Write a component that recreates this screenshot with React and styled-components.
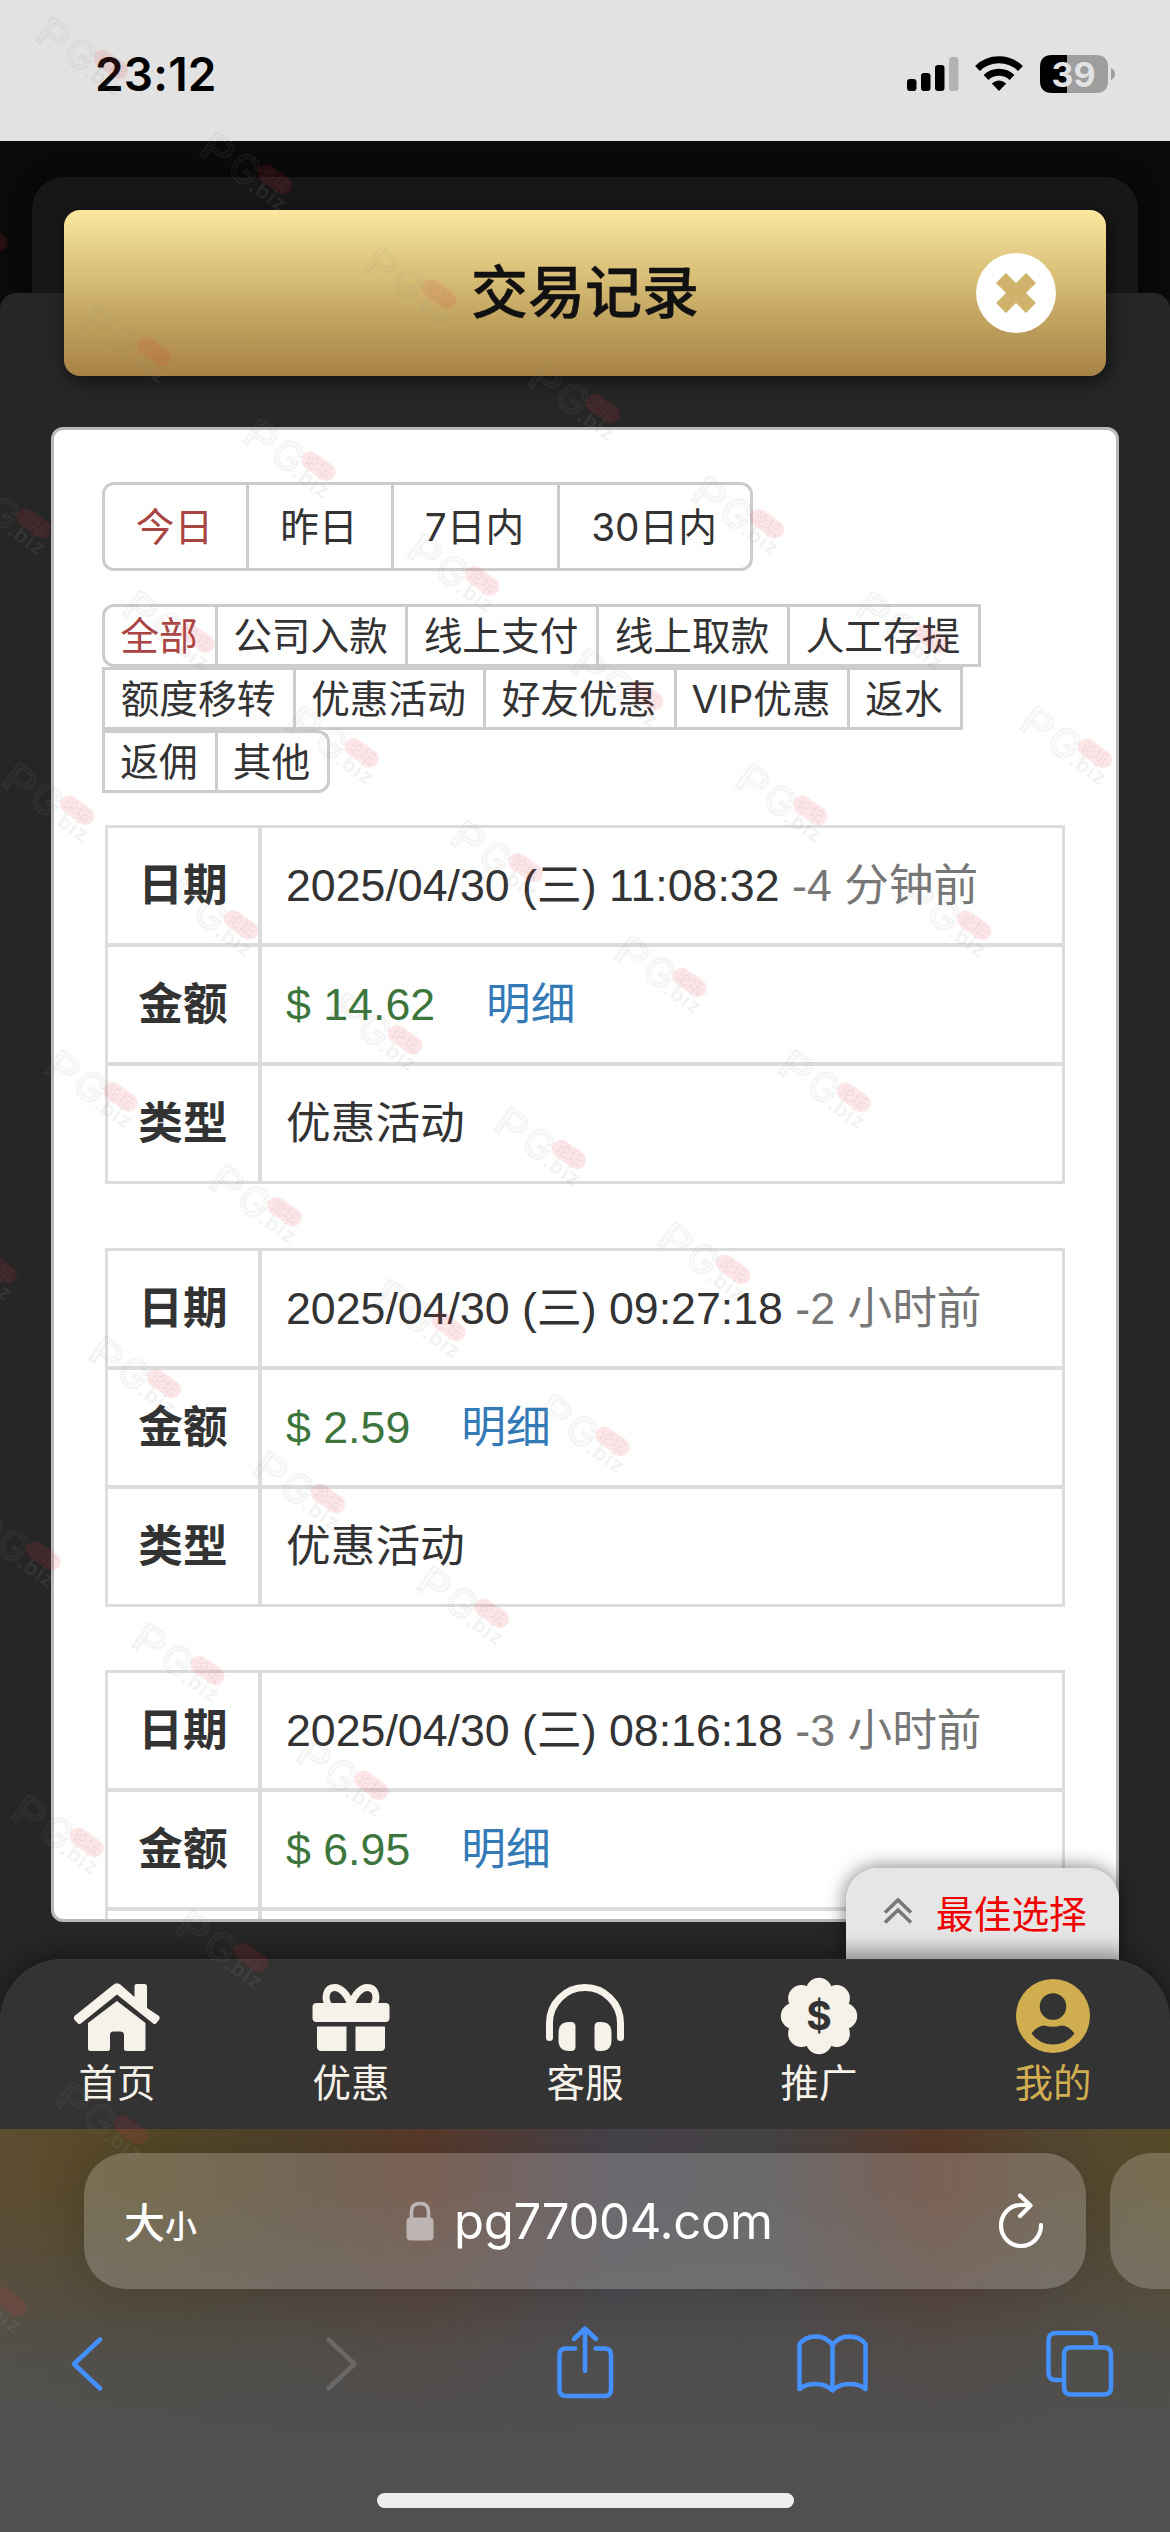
import styled, { createGlobalStyle, css } from "styled-components";

const GlobalStyle = createGlobalStyle`
  * {
    box-sizing: border-box;
  }
  body {
    margin: 0;
    background: #505050;
  }
  button {
    font: inherit;
    color: inherit;
    border: 0;
    padding: 0;
    background: none;
  }
`;

const Screen = styled.div`
  position: relative;
  width: 1170px;
  height: 2532px;
  display: flex;
  flex-direction: column;
  overflow: hidden;
  font-family: "Inter", "Noto Sans CJK SC", sans-serif;
  color: #333;
`;

/* ---------- status bar ---------- */

const StatusBar = styled.div`
  height: 141px;
  flex: none;
  display: flex;
  justify-content: space-between;
  padding: 45px 55px 0 95px;
  background: #e2e2e2;
  color: #000;
`;
const Clock = styled.div`
  height: 60px;
  line-height: 59px;
  font-size: 46px;
  font-weight: 600;
  letter-spacing: 0.2px;
`;
const StatusIcons = styled.svg`
  width: 210px;
  height: 60px;
`;

/* ---------- site ---------- */

const Site = styled.div`
  position: relative;
  height: 1988px;
  flex: none;
  display: flex;
  flex-direction: column;
  overflow: hidden;
  background: #0a0a0a;
`;
const BackSheet = styled.div`
  position: absolute;
  top: 36px;
  left: 32px;
  right: 32px;
  height: 300px;
  border-radius: 32px 32px 0 0;
  background: #171717;
  box-shadow: 0 0 20px rgba(0, 0, 0, 0.6);
`;
const FrontSheet = styled.div`
  position: absolute;
  top: 152px;
  left: 0;
  right: 0;
  bottom: 0;
  border-radius: 16px 16px 0 0;
  background: #262626;
`;
const TitleBar = styled.div`
  position: relative;
  height: 166px;
  flex: none;
  margin: 69px 64px 0;
  display: flex;
  align-items: center;
  justify-content: center;
  border-radius: 16px;
  background: linear-gradient(#fbe79d 0%, #c6a964 60%, #b39150 85%, #a78145 100%);
  box-shadow: 3px 5px 16px rgba(0, 0, 0, 0.55);
`;
const Title = styled.h1`
  margin: 0;
  line-height: 80px;
  font-size: 57px;
  font-weight: 500;
  -webkit-text-stroke: 0.5px #111;
  color: #111;
`;
const CloseButton = styled.button`
  position: absolute;
  right: 50px;
  top: 43px;
  width: 80px;
  height: 80px;
  svg {
    display: block;
  }
`;
const Panel = styled.div`
  position: relative;
  height: 1495px;
  flex: none;
  margin: 51px 51px 0;
  padding: 52px 48px 0;
  overflow: hidden;
  border: 3px solid #b9b9b9;
  border-radius: 12px;
  background: #fff;
`;

/* ---------- filters ---------- */

const ButtonRow = styled.div`
  display: flex;
`;
const DateTabs = styled(ButtonRow)`
  margin-bottom: 33px;
`;
const FilterButton = styled.button`
  height: ${({ $tall }) => ($tall ? "89px" : "63px")};
  padding: ${({ $tall }) => ($tall ? "0 31px 0 29px" : "0 16px 0 14px")};
  line-height: ${({ $tall }) => ($tall ? "82px" : "56px")};
  width: ${({ $width }) => $width}px;
  border: 3px solid #ccc;
  background: #fff;
  font-size: 38.7px;
  white-space: nowrap;
  color: ${({ $active }) => ($active ? "#a94442" : "#333")};
  & + & {
    margin-left: -3px;
  }
  ${({ $first }) =>
    $first &&
    css`
      border-top-left-radius: 12px;
      border-bottom-left-radius: 12px;
    `}
  ${({ $last }) =>
    $last &&
    css`
      border-top-right-radius: 12px;
      border-bottom-right-radius: 12px;
    `}
`;

/* ---------- records ---------- */

const Records = styled.div`
  padding: 32px 3px 0;
`;
const RecordCard = styled.dl`
  margin: 0 0 63.5px;
  padding: 3px;
  display: grid;
  grid-template-columns: 150px 1fr;
  grid-auto-rows: 115px;
  gap: 4px;
  background: #dcdcdc;
  font-family: "Liberation Sans", "Noto Sans CJK SC", sans-serif;
  font-size: 44.7px;
  line-height: 115px;
  white-space: pre;
`;
const Label = styled.dt`
  background: #fff;
  text-align: center;
  font-weight: 700;
`;
const Value = styled.dd`
  margin: 0;
  padding-left: 24px;
  background: #fff;
`;
const Ago = styled.span`
  color: #777;
`;
const Amount = styled.span`
  color: #3c763d;
`;
const DetailLink = styled.a`
  margin-left: 51px;
  color: #337ab7;
`;

/* ---------- bottom navigation ---------- */

const BestPick = styled.div`
  position: absolute;
  right: 51px;
  bottom: 169px;
  width: 273px;
  height: 92px;
  display: flex;
  padding: 0 0 0 34px;
  border-radius: 32px 32px 0 0;
  background: linear-gradient(#e6e6e6 75%, #d2d2d2);
  box-shadow: 0 0 20px rgba(0, 0, 0, 0.55);
  font-size: 37.7px;
  line-height: 93px;
  color: #f00000;
  svg {
    margin: 26px 20px 0 0;
  }
`;
const TabBar = styled.nav`
  position: relative;
  height: 170px;
  flex: none;
  margin-top: 37px;
  display: flex;
  border-radius: 62px 62px 0 0;
  border-top: 1px solid #3c3c3c;
  background: #333;
  box-shadow: 0 -4px 24px rgba(0, 0, 0, 0.4);
`;
const Tab = styled.a`
  flex: 1;
  display: flex;
  flex-direction: column;
  align-items: center;
  padding-top: 17px;
  font-size: 38.5px;
  line-height: 56px;
  color: ${({ $active }) => ($active ? "#d0ae50" : "#f6f2ea")};
  svg {
    display: block;
  }
`;

/* ---------- browser chrome ---------- */

const Browser = styled.div`
  position: relative;
  flex: 1;
  background:
    linear-gradient(rgba(80, 80, 80, 0) 15%, rgba(80, 80, 80, 0.85) 58%, #505050 80%),
    linear-gradient(90deg, #5d4d31 0%, #554826 13%, #50402c 26%, #5a3a2b 36%, #47434b 52%, #474446 66%, #5a3a2a 80%, #554833 90%, #554926 100%);
`;
const AddressRow = styled.div`
  display: flex;
  gap: 24px;
  padding: 24px 0 0 84px;
`;
const AddressBar = styled.div`
  width: 1002px;
  height: 136px;
  flex: none;
  display: flex;
  align-items: center;
  padding: 0 40px;
  border-radius: 42px;
  background: rgba(255, 255, 255, 0.2);
  box-shadow: 0 0 50px rgba(0, 0, 0, 0.15);
  color: #fff;
`;
const NextTab = styled.div`
  width: 200px;
  height: 136px;
  flex: none;
  border-radius: 42px;
  background: rgba(255, 255, 255, 0.2);
`;
const TextSize = styled.span`
  width: 282px;
  padding-top: 1px;
  font-family: "Noto Sans CJK SC", sans-serif;
  font-size: 41px;
  font-weight: 500;
  line-height: 60px;
  small {
    font-size: 32px;
  }
`;
const Address = styled.span`
  flex: 1;
  padding: 2px 0 0 20px;
  font-size: 49px;
  line-height: 60px;
  letter-spacing: -0.3px;
`;
const Toolbar = styled.div`
  display: flex;
  align-items: center;
  justify-content: space-between;
  height: 76px;
  margin-top: 37px;
  padding: 0 54px 0 52px;
`;
const HomeIndicator = styled.div`
  width: 417px;
  height: 15px;
  margin: 91px auto 0;
  border-radius: 8px;
  background: #eee;
`;

const Watermarks = styled.svg`
  position: absolute;
  inset: 0;
  width: 1170px;
  height: 2532px;
  pointer-events: none;
`;

/* ---------- data ---------- */

const dateTabs = [
  { text: "今日", width: 147 },
  { text: "昨日", width: 148 },
  { text: "7日内", width: 169 },
  { text: "30日内", width: 196 },
];

const filterRows = [
  [
    { text: "全部", width: 116 },
    { text: "公司入款", width: 193 },
    { text: "线上支付", width: 194 },
    { text: "线上取款", width: 194 },
    { text: "人工存提", width: 194 },
  ],
  [
    { text: "额度移转", width: 194 },
    { text: "优惠活动", width: 193 },
    { text: "好友优惠", width: 194 },
    { text: "VIP优惠", width: 176 },
    { text: "返水", width: 116 },
  ],
  [
    { text: "返佣", width: 116 },
    { text: "其他", width: 115 },
  ],
];

const records = [
  { date: "2025/04/30 (三) 11:08:32", ago: "-4 分钟前", amount: "$ 14.62", type: "优惠活动" },
  { date: "2025/04/30 (三) 09:27:18", ago: "-2 小时前", amount: "$ 2.59", type: "优惠活动" },
  { date: "2025/04/30 (三) 08:16:18", ago: "-3 小时前", amount: "$ 6.95", type: "优惠活动" },
];

// diagonal grid, every line is one mark shorter than the line above
const marks = [];
for (let row = 0; row <= 9; row += 1) {
  for (let col = -3; col + row <= 6; col += 1) {
    const x = 33 + col * 164 + row * 43.4;
    const y = 38 + col * 114.8 + row * 286.8;
    if (x > -100 && y > 0) marks.push({ x, y });
  }
}

/* ---------- icons ---------- */

const SystemStatus = () => (
  <StatusIcons viewBox="905 45 210 60">
    <rect x="907" y="79" width="9.5" height="12" rx="3" />
    <rect x="921" y="73" width="9.5" height="18" rx="3" />
    <rect x="935" y="65" width="9.5" height="26" rx="3" />
    <rect x="949" y="57" width="9.5" height="34" rx="3" fill="#b3b3b3" />
    <path d="M977.5 68.5 A31 31 0 0 1 1020.5 68.5" fill="none" stroke="#000" strokeWidth="7" />
    <path d="M986 77.5 A19 19 0 0 1 1012 77.5" fill="none" stroke="#000" strokeWidth="7" />
    <path d="M999 91 L991.8 83.6 Q999 77.5 1006.2 83.6 Z" />
    <path d="M1052 55 H1067 V93 H1052 Q1040 93 1040 81 V67 Q1040 55 1052 55 Z" />
    <path d="M1067 55 H1096 Q1108 55 1108 67 V81 Q1108 93 1096 93 H1067 Z" fill="#9e9e9e" />
    <path d="M1111 68 Q1115 70 1115 74 Q1115 78 1111 80 Z" fill="#9e9e9e" />
    <text x="1073.5" y="86.5" textAnchor="middle" fontSize="34" fontWeight="700" fill="#e2e2e2">
      39
    </text>
  </StatusIcons>
);

const CloseIcon = () => (
  <svg width="80" height="80" viewBox="0 0 80 80">
    <circle cx="40" cy="40" r="40" fill="#fff" />
    <path d="M25 25 L55 55 M55 25 L25 55" stroke="#d0b26b" strokeWidth="14" />
  </svg>
);

const ChevronsUp = () => (
  <svg width="36" height="40" viewBox="880 1894 36 40" fill="none" stroke="#777" strokeWidth="3.6">
    <path d="M885 1912.5 L898 1900 L911 1912.5 M885 1922.5 L898 1910 L911 1922.5" />
  </svg>
);

const HomeIcon = () => (
  <svg width="90" height="78" viewBox="71.5 1977 90 78" fill="currentColor">
    <path d="M112.5 1985 Q116.5 1981.5 120.5 1985 L134 1997 V1986 Q134 1984 136 1984 H144 Q146.5 1984 146.5 1986.5 V2008 L158.5 2016 Q160 2018 158.5 2020 L155.5 2023.5 Q154 2025 152 2023 L116.5 1994.5 L81 2023 Q79 2025 77.5 2023.5 L74 2020 Q72.5 2018 74 2016 Z" />
    <path d="M116.5 2001 L145 2023 V2048.5 Q145 2051 142.5 2051 H126 Q123.5 2051 123.5 2048.5 V2035 Q123.5 2031.5 120 2031.5 H112.5 Q109.5 2031.5 109.5 2035 V2048.5 Q109.5 2051 107 2051 H90 Q87.5 2051 87.5 2048.5 V2023 Z" />
  </svg>
);

const GiftIcon = () => (
  <svg width="90" height="78" viewBox="305.5 1977 90 78" fill="currentColor">
    <path
      d="M350.5 2005 C346 1992 339 1987.5 334.5 1987.5 C324.5 1987.5 324 1999 328 2005 M350.5 2005 C355 1992 362 1987.5 366.5 1987.5 C376.5 1987.5 377 1999 373 2005"
      fill="none"
      stroke="currentColor"
      strokeWidth="7"
    />
    <rect x="312" y="2003" width="77" height="19" rx="4" />
    <path d="M316.5 2026.5 H346 V2051 H321 Q316.5 2051 316.5 2046.5 Z" />
    <path d="M355 2026.5 H384.5 V2046.5 Q384.5 2051 380 2051 H355 Z" />
  </svg>
);

const HeadsetIcon = () => (
  <svg width="90" height="78" viewBox="540 1977 90 78" fill="currentColor">
    <path
      d="M549.5 2037.5 V2023 A35.5 35.5 0 0 1 620.5 2023 V2037.5"
      fill="none"
      stroke="currentColor"
      strokeWidth="7"
      strokeLinecap="round"
    />
    <path d="M569 2022 H571 Q575.5 2022 575.5 2026.5 V2046.5 Q575.5 2051 571 2051 H569 Q558.5 2051 558.5 2040 V2033 Q558.5 2022 569 2022 Z" />
    <path d="M601 2022 H599 Q594.5 2022 594.5 2026.5 V2046.5 Q594.5 2051 599 2051 H601 Q611.5 2051 611.5 2040 V2033 Q611.5 2022 601 2022 Z" />
  </svg>
);

const PromoIcon = () => (
  <svg width="90" height="78" viewBox="773.5 1978.5 90 78" fill="currentColor">
    <circle cx="818.5" cy="2017.5" r="27" />
    {[0, 45, 90, 135, 180, 225, 270, 315].map((deg) => (
      <circle key={deg} cx="818.5" cy="1992.5" r="13.2" transform={`rotate(${deg} 818.5 2017.5)`} />
    ))}
    <text x="818.5" y="2031.5" textAnchor="middle" fontSize="39" fontWeight="700" fill="#333">
      $
    </text>
  </svg>
);

const ProfileIcon = () => (
  <svg width="90" height="78" viewBox="1007.5 1978 90 78">
    <circle cx="1052.5" cy="2017" r="37" fill="currentColor" />
    <circle cx="1052.5" cy="2007.5" r="13.3" fill="#333" />
    <path
      d="M1031 2034.5 Q1037 2026.5 1044 2026.5 Q1052.5 2029 1061 2026.5 Q1068 2026.5 1074 2034.5 Q1066 2045.5 1052.5 2045.5 Q1039 2045.5 1031 2034.5 Z"
      fill="#333"
    />
  </svg>
);

const LockIcon = () => (
  <svg width="28" height="42" viewBox="405.5 2199.5 28 42">
    <path d="M411 2219 V2211 Q411 2203 419.5 2203 Q428 2203 428 2211 V2219" fill="none" stroke="#bdb5b3" strokeWidth="3.6" />
    <rect x="406" y="2217" width="27" height="23" rx="4" fill="#bdb5b3" />
  </svg>
);

const ReloadIcon = () => (
  <svg
    width="50"
    height="60"
    viewBox="995 2190 50 60"
    fill="none"
    stroke="#fff"
    strokeWidth="4.2"
    strokeLinecap="round"
    strokeLinejoin="round"
  >
    <path d="M1040 2224 A20 20.5 0 1 1 1020 2204 H1029 M1019 2194.5 L1029.5 2204.5 L1019 2215" />
  </svg>
);

const ToolIcon = ({ left, d, color = "#4590ff" }) => (
  <svg
    width="72"
    height="76"
    viewBox={`${left} 2326 72 76`}
    fill="none"
    stroke={color}
    strokeWidth="4.5"
    strokeLinecap="round"
    strokeLinejoin="round"
    overflow="visible"
  >
    <path d={d} />
  </svg>
);

const tools = [
  { left: 52, d: "M100 2339.5 L74 2364 L100 2388.5" },
  { left: 300, d: "M328.5 2339.5 L354.5 2364 L328.5 2388.5", color: "#6a6967" },
  {
    left: 548,
    d: "M575 2348.5 H566 Q559.5 2348.5 559.5 2355 V2389.5 Q559.5 2396 566 2396 H604.5 Q611 2396 611 2389.5 V2355 Q611 2348.5 604.5 2348.5 H595.5 M585 2371 V2329 M574 2339 L585 2328.5 L596 2339",
  },
  {
    left: 796,
    d: "M832.5 2390.5 V2345 Q826 2336.5 816 2336.5 Q805 2336.5 799.5 2344 V2389 Q805 2384 816 2384 Q826 2384 832.5 2390.5 Q839 2384 849 2384 Q860 2384 865.5 2389 V2344 Q860 2336.5 849 2336.5 Q839 2336.5 832.5 2345",
  },
  {
    left: 1044,
    d: "M1060 2380 H1056 Q1048.5 2380 1048.5 2372.5 V2340.5 Q1048.5 2333 1056 2333 H1088.5 Q1096 2333 1096 2340.5 V2345 M1071 2347.5 H1104 Q1111 2347.5 1111 2354.5 V2387.5 Q1111 2394.5 1104 2394.5 H1071 Q1064 2394.5 1064 2387.5 V2354.5 Q1064 2347.5 1071 2347.5 Z",
  },
];

const tabs = [
  { text: "首页", Icon: HomeIcon },
  { text: "优惠", Icon: GiftIcon },
  { text: "客服", Icon: HeadsetIcon },
  { text: "推广", Icon: PromoIcon },
  { text: "我的", Icon: ProfileIcon, active: true },
];

function Record({ record }) {
  return (
    <RecordCard>
      <Label>日期</Label>
      <Value>
        {record.date} <Ago>{record.ago}</Ago>
      </Value>
      <Label>金额</Label>
      <Value>
        <Amount>{record.amount}</Amount>
        <DetailLink>明细</DetailLink>
      </Value>
      <Label>类型</Label>
      <Value>{record.type}</Value>
    </RecordCard>
  );
}

function Watermark({ x, y }) {
  return (
    <g transform={`translate(${x} ${y}) rotate(35)`}>
      <g fill="none" stroke="#8a8a8a" strokeWidth="2.6" strokeDasharray="1.5 1" strokeOpacity="0.15" fontSize="39">
        <text x="0" y="0" textLength="31" lengthAdjust="spacingAndGlyphs">
          P
        </text>
        <text x="34" y="0">
          G
        </text>
      </g>
      <text x="62" y="1" fontSize="21" fontWeight="600" letterSpacing="1" fill="#999" fillOpacity="0.15">
        .biz
      </text>
      <rect x="60" y="-32" width="38" height="18" rx="9" fill="#f0323c" fillOpacity="0.12" />
      <text x="79" y="-17.5" textAnchor="middle" fontSize="15" fill="#777" fillOpacity="0.12">
        论坛
      </text>
    </g>
  );
}

function App() {
  return (
    <Screen>
      <GlobalStyle />
      <StatusBar>
        <Clock>23:12</Clock>
        <SystemStatus />
      </StatusBar>

      <Site>
        <BackSheet />
        <FrontSheet />
        <TitleBar>
          <Title>交易记录</Title>
          <CloseButton aria-label="close">
            <CloseIcon />
          </CloseButton>
        </TitleBar>

        <Panel>
          <DateTabs>
            {dateTabs.map(({ text, width }, i) => (
              <FilterButton key={text} $tall $width={width} $active={i === 0} $first={i === 0} $last={i === 3}>
                {text}
              </FilterButton>
            ))}
          </DateTabs>
          {filterRows.map((row, r) => (
            <ButtonRow key={row[0].text}>
              {row.map(({ text, width }, i) => (
                <FilterButton
                  key={text}
                  $width={width}
                  $active={text === "全部"}
                  $first={r === 0 && i === 0}
                  $last={text === "其他"}
                >
                  {text}
                </FilterButton>
              ))}
            </ButtonRow>
          ))}
          <Records>
            {records.map((record) => (
              <Record key={record.date} record={record} />
            ))}
          </Records>
        </Panel>

        <BestPick>
          <ChevronsUp />
          最佳选择
        </BestPick>
        <TabBar>
          {tabs.map(({ text, Icon, active }) => (
            <Tab key={text} $active={active}>
              <Icon />
              {text}
            </Tab>
          ))}
        </TabBar>
      </Site>

      <Browser>
        <AddressRow>
          <AddressBar>
            <TextSize>
              大<small>小</small>
            </TextSize>
            <LockIcon />
            <Address>pg77004.com</Address>
            <ReloadIcon />
          </AddressBar>
          <NextTab />
        </AddressRow>
        <Toolbar>
          {tools.map((tool) => (
            <ToolIcon key={tool.left} {...tool} />
          ))}
        </Toolbar>
        <HomeIndicator />
      </Browser>

      <Watermarks viewBox="0 0 1170 2532">
        {marks.map(({ x, y }) => (
          <Watermark key={`${x}-${y}`} x={x} y={y} />
        ))}
      </Watermarks>
    </Screen>
  );
}

export default App;
